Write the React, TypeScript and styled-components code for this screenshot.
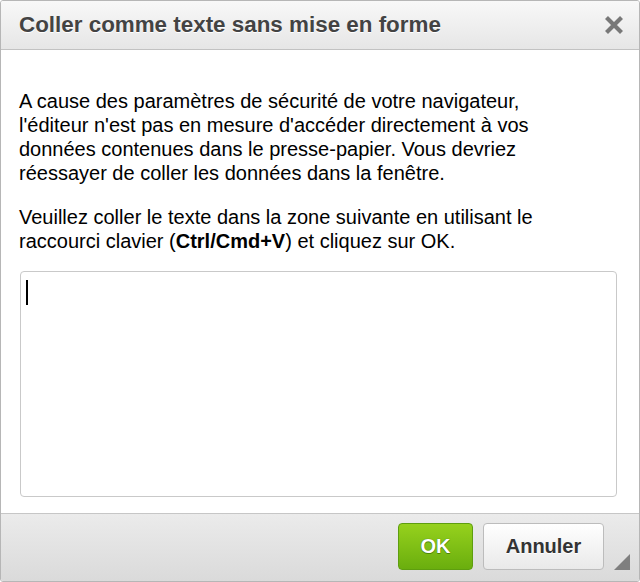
import React from "react";
import styled, { createGlobalStyle } from "styled-components";

const Global = createGlobalStyle`
  html, body { margin: 0; padding: 0; background: #ffffff; }
  body { font-family: Arial, "Liberation Sans", sans-serif; }
  * { box-sizing: border-box; }
`;

const Dialog = styled.div`
  width: 640px;
  height: 582px;
  border: 1px solid #b6b6b6;
  border-radius: 3px;
  display: flex;
  flex-direction: column;
  background: #ffffff;
  overflow: hidden;
`;

const Header = styled.div`
  height: 49px;
  flex: none;
  display: flex;
  align-items: center;
  justify-content: space-between;
  padding: 0 14px 0 18px;
  background: linear-gradient(#f8f8f8, #e6e6e6);
  border-bottom: 1px solid #c2c2c2;
`;

const Title = styled.h1`
  margin: 0;
  font-family: "Liberation Sans", Arial, sans-serif;
  font-size: 22.4px;
  font-weight: bold;
  color: #434343;
  text-shadow: 0 1px 0 #ffffff;
  line-height: 26px;
  padding-bottom: 1px;
`;

const Close = styled.button`
  width: 22px;
  height: 22px;
  border: 0;
  padding: 0;
  background: transparent;
  display: flex;
  align-items: center;
  justify-content: center;
  cursor: pointer;
`;

const Body = styled.div`
  flex: 1;
  padding: 39px 22px 0 18px;
  display: flex;
  flex-direction: column;
`;

const Para = styled.p<{ $gap: number }>`
  margin: 0 0 ${(p) => p.$gap}px 0;
  font-family: "Liberation Sans", Arial, sans-serif;
  font-size: 20px;
  line-height: 24px;
  color: #000000;
  white-space: nowrap;
`;

const PasteArea = styled.div`
  margin-left: 1px;
  width: 597px;
  height: 226px;
  border: 1px solid #c9c9c9;
  border-radius: 4px;
  padding: 8px 5px;
  background: #ffffff;
`;

const Caret = styled.span`
  display: block;
  width: 2px;
  height: 25px;
  background: #000000;
`;

const Footer = styled.div`
  position: relative;
  height: 68px;
  flex: none;
  border-top: 1px solid #c6c6c6;
  background: linear-gradient(#ebebeb, #dadada);
  display: flex;
  justify-content: flex-end;
  align-items: flex-start;
  gap: 10px;
  padding: 9px 35px 0 0;
`;

const Button = styled.button<{ $primary?: boolean }>`
  height: 47px;
  border-radius: 4px;
  font-family: "Liberation Sans", Arial, sans-serif;
  font-size: 20px;
  font-weight: bold;
  padding: 0;
  cursor: pointer;
  ${(p) =>
    p.$primary
      ? `
    width: 75px;
    color: #ffffff;
    border: 1px solid #5e9e0f;
    background: linear-gradient(#96d11d, #6aae0e);
    text-shadow: 0 0 1px #3d6b05, 0 1px 0 #4f8a08;
  `
      : `
    width: 121px;
    color: #333333;
    border: 1px solid #bcbcbc;
    background: linear-gradient(#ffffff, #e9e9e9);
    text-shadow: 0 1px 0 #ffffff;
  `}
`;

const Resizer = styled.div`
  position: absolute;
  right: 9px;
  bottom: 11px;
  width: 0;
  height: 0;
  border-left: 16px solid transparent;
  border-bottom: 16px solid #7f7f7f;
`;

export default function App() {
  return (
    <>
      <Global />
      <Dialog>
        <Header>
          <Title>Coller comme texte sans mise en forme</Title>
          <Close aria-label="Fermer">
            <svg width="20" height="20" viewBox="0 0 20 20">
              <path
                d="M2.5 2.5 L17.5 17.5 M17.5 2.5 L2.5 17.5"
                stroke="#787878"
                strokeWidth="4.2"
                strokeLinecap="butt"
              />
            </svg>
          </Close>
        </Header>
        <Body>
          <Para $gap={20}>
            A cause des paramètres de sécurité de votre navigateur,
            <br />
            l'éditeur n'est pas en mesure d'accéder directement à vos
            <br />
            données contenues dans le presse-papier. Vous devriez
            <br />
            réessayer de coller les données dans la fenêtre.
          </Para>
          <Para $gap={18}>
            Veuillez coller le texte dans la zone suivante en utilisant le
            <br />
            raccourci clavier (<b>Ctrl/Cmd+V</b>) et cliquez sur OK.
          </Para>
          <PasteArea>
            <Caret />
          </PasteArea>
        </Body>
        <Footer>
          <Button $primary>OK</Button>
          <Button>Annuler</Button>
          <Resizer />
        </Footer>
      </Dialog>
    </>
  );
}
